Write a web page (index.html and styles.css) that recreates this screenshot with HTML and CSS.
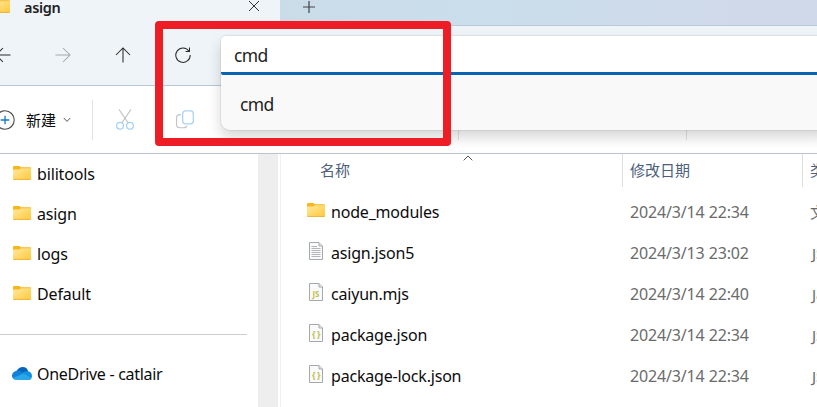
FILE: index.html
```html
<!DOCTYPE html>
<html lang="zh-CN">
<head>
<meta charset="utf-8">
<title>asign</title>
<link rel="stylesheet" href="styles.css">
</head>
<body>
<svg class="defs" width="0" height="0">
  <defs>
    <linearGradient id="gold" x1="0" y1="0" x2="1" y2="1"><stop offset="0" stop-color="#ffe9a0"/><stop offset="1" stop-color="#ffc938"/></linearGradient>
    <symbol id="folder" viewBox="0 0 18 14">
      <path d="M0 1.2Q0 0 1.2 0H6.3L8 1.2H17Q18 1.2 18 2.2V8H0Z" fill="#f8b51c"/>
      <path d="M0 3.6H6.4L8 2.2H18V13Q18 14 17 14H1Q0 14 0 13Z" fill="url(#gold)"/>
      <path d="M.4 13.4H17.6" stroke="#edb53c" stroke-width="1"/>
    </symbol>
    <symbol id="page" viewBox="0 0 14 18">
      <path d="M.5.5H10L13.5 4V17.5H.5Z" fill="#f9fafb" stroke="#a6a8ac"/>
      <path d="M10 .5V4H13.5" fill="#e4e6e8" stroke="#a6a8ac"/>
    </symbol>
  </defs>
</svg>
<div class="window">
  <header class="tabs">
    <div class="tab">
      <svg class="tab-folder" width="18" height="14"><use href="#folder"/></svg>
      <span class="tab-title">asign</span>
      <svg class="close" width="12" height="12" viewBox="0 0 12 12"><path d="M1 1 11 11M11 1 1 11"/></svg>
    </div>
    <div class="strip"><svg class="plus" width="12" height="12" viewBox="0 0 12 12"><path d="M6 0V12M0 6H12"/></svg></div>
  </header>

  <nav class="nav">
    <svg class="ico back" width="16" height="16" viewBox="0 0 16 16"><path d="M15.5 8H1M8 1 1 8 8 15"/></svg>
    <svg class="ico forward" width="16" height="16" viewBox="0 0 16 16"><path d="M.5 8H15M8 1 15 8 8 15"/></svg>
    <svg class="ico up" width="16" height="16" viewBox="0 0 16 16"><path d="M8 15.5V1M1 8 8 1 15 8"/></svg>
    <svg class="ico refresh" width="16" height="16" viewBox="0 0 16 16"><path d="M14 4.2A7.2 7.2 0 1 0 15.2 8M14.5.6V4.4H10.6"/></svg>
    <div class="address">
      <div class="field">cmd</div>
      <div class="suggest">cmd</div>
    </div>
  </nav>

  <div class="toolbar">
    <svg class="new" width="20" height="20" viewBox="0 0 20 20"><circle cx="10" cy="10" r="9.2" fill="#fff" stroke="#4a4a4a" stroke-width="1.1"/><path d="M10 5.7V14.3M5.7 10H14.3" stroke="#1478c8" stroke-width="1.3"/></svg>
    <span class="new-label">新建</span>
    <svg class="chev" width="8" height="6" viewBox="0 0 8 6"><path d="M.8 1 4 4.4 7.2 1"/></svg>
    <i class="sep sep-new"></i>
    <svg class="cut" width="18" height="21" viewBox="0 0 18 21" fill="none"><path d="M3 .5 12.3 14M15 .5 5.7 14" stroke="#bdbdbd" stroke-width="1.1"/><circle cx="4" cy="16.8" r="3.4" stroke="#a3d0f2" stroke-width="1.2"/><circle cx="14" cy="16.8" r="3.4" stroke="#a3d0f2" stroke-width="1.2"/></svg>
    <svg class="copy" width="18" height="19" viewBox="0 0 18 19" fill="none"><path d="M5 4.6H3.6Q.6 4.6 .6 7.6V14.5Q.6 17.8 3.9 17.8H7.5Q10.5 17.8 11 15.6" stroke="#c2c2c2" stroke-width="1.1"/><rect x="6.7" y=".9" width="10.6" height="13" rx="2.8" stroke="#a9d3f4" stroke-width="1.3"/></svg>
    <i class="sep sep-a"></i>
    <i class="sep sep-b"></i>
  </div>

  <main class="content">
    <aside class="side">
      <div class="place"><svg width="18" height="14"><use href="#folder"/></svg><span>bilitools</span></div>
      <div class="place"><svg width="18" height="14"><use href="#folder"/></svg><span>asign</span></div>
      <div class="place"><svg width="18" height="14"><use href="#folder"/></svg><span>logs</span></div>
      <div class="place"><svg width="18" height="14"><use href="#folder"/></svg><span>Default</span></div>
      <div class="divider"></div>
      <div class="place cloud"><svg width="20" height="13" viewBox="0 0 20 13"><path d="M4.6 4Q7 0 10.6 0 15 .1 16.2 4.3L12 8 4 6Z" fill="#0864b8"/><path d="M4.5 3.7Q8 2.8 10.5 5.5L14 8 3 12.6Q0 12 0 8.5.3 4.6 4.5 3.7Z" fill="#1380d8"/><path d="M10 6.2Q12.5 3.8 16 4.3 19.7 5 20 8.7 20 12 17 13H8Z" fill="#1490df"/><path d="M1 11 11.4 6.4 19.3 11Q18.3 13 16 13H4.2Q2 13 1 11Z" fill="#28a8ea"/></svg><span>OneDrive - catlair</span></div>
      <div class="place desktop"><svg width="16" height="12"><rect width="16" height="12" rx="1.6" fill="#35b2f8"/></svg></div>
    </aside>
    <div class="scroll"></div>
    <section class="files">
      <div class="head">
        <div class="h-name">名称<svg class="sort" width="10" height="6" viewBox="0 0 10 6"><path d="M.7 5.3 5 1 9.3 5.3"/></svg></div>
        <div class="h-date">修改日期</div>
        <div class="h-type">类型</div>
      </div>
      <div class="row"><div class="name"><svg class="dir" width="18" height="14"><use href="#folder"/></svg><span>node_modules</span></div><div class="date">2024/3/14 22:34</div><div class="type">文件夹</div></div>
      <div class="row"><div class="name"><svg width="14" height="18" viewBox="0 0 14 18"><use href="#page"/><path d="M2.5 4.5H8M2.5 6.5H11.5M2.5 8.5H11.5M2.5 10.5H11.5M2.5 12.5H11.5M2.5 14.5H11.5" stroke="#b4b6b8"/></svg><span>asign.json5</span></div><div class="date">2024/3/13 23:02</div><div class="type latin">JSON5</div></div>
      <div class="row"><div class="name"><svg width="14" height="18" viewBox="0 0 14 18"><use href="#page"/><text x="7" y="13.6" class="badge">JS</text></svg><span>caiyun.mjs</span></div><div class="date">2024/3/14 22:40</div><div class="type latin">JavaScript</div></div>
      <div class="row"><div class="name"><svg width="14" height="18" viewBox="0 0 14 18"><use href="#page"/><text x="7" y="13" class="badge brace">{ }</text></svg><span>package.json</span></div><div class="date">2024/3/14 22:34</div><div class="type latin">JSON</div></div>
      <div class="row"><div class="name"><svg width="14" height="18" viewBox="0 0 14 18"><use href="#page"/><text x="7" y="13" class="badge brace">{ }</text></svg><span>package-lock.json</span></div><div class="date">2024/3/14 22:34</div><div class="type latin">JSON</div></div>
    </section>
  </main>
  <div class="marker"></div>
</div>
</body>
</html>
```
FILE: styles.css
```css
* { box-sizing: border-box; }
body { margin: 0; font: 16px/20px "Noto Sans", "Noto Sans CJK SC", sans-serif; letter-spacing: -.2px; color: #0c0c0c; }
svg { display: block; flex: none; }
.defs { position: absolute; }
.window { position: relative; width: 817px; height: 407px; overflow: hidden; display: flex; flex-direction: column; background: #fff; }

.tabs { display: flex; height: 26px; flex: none; }
.tab { width: 280px; display: flex; align-items: flex-start; background: #eff4f9; }
.tab-folder { margin: -1px 0 0 -8px; }
.tab-title { margin: 0 0 0 14px; width: 224px; font-size: 14.5px; line-height: 14px; font-weight: 600; letter-spacing: -.35px; color: #222; }
.close { stroke: #333; stroke-width: 1; fill: none; }
.strip { flex: 1; border-bottom: 1px solid #b9c9d8; background: linear-gradient(90deg, #cbdce9, #cadeeb 40%, #d0d9ea 85%); }
.plus { margin: 1px 0 0 23px; stroke: #444; stroke-width: 1.2; }

.nav { position: relative; z-index: 1; display: flex; height: 60px; flex: none; align-items: flex-start; padding-top: 21px; background: #eff4f9; border-bottom: 1px solid #b8c6d3; }
.ico { fill: none; stroke: #2b2b2b; stroke-width: 1.05; }
.back { margin-left: -5px; }
.forward { margin-left: 44px; stroke: #a5a8ab; }
.up { margin-left: 44px; }
.refresh { margin-left: 44px; }
.address { position: absolute; left: 221px; top: 10px; width: 610px; height: 94px; border-radius: 5px 5px 9px 9px; background: #f9f9f9; box-shadow: 0 0 0 1px rgba(0,0,0,.06), 0 7px 14px rgba(0,0,0,.17); color: #222; font-size: 17.5px; letter-spacing: -.65px; }
.field { height: 39px; padding: 9px 13px 0; background: #fff; border-bottom: 3px solid #0964b3; border-radius: 5px 5px 2px 2px; }
.suggest { padding: 19px 19px; }

.toolbar { display: flex; height: 68px; flex: none; align-items: center; border-bottom: 1px solid #b8c6d3; }
.new { margin-left: -5px; }
.new-label { margin-left: 11px; width: 30px; font-size: 15px; letter-spacing: 0; }
.chev, .sort { fill: none; stroke: #555; stroke-width: 1; }
.chev { margin-left: 7px; }
.sep { width: 1px; height: 40px; background: #e2e2e2; }
.sep-new { margin-left: 21px; }
.cut { margin-left: 23px; }
.copy { margin-left: 42px; }
.sep-a { margin-left: 264px; }
.sep-b { margin-left: 227px; }

.content { display: flex; flex: 1; min-height: 0; }
.side { width: 258px; overflow: hidden; }
.place { display: flex; height: 40px; align-items: center; padding-left: 13px; gap: 6px; letter-spacing: -.15px; white-space: nowrap; }
.place svg { margin-top: -2px; }
.divider { width: 247px; height: 1px; margin: 20px 0 19px; background: #cecece; }
.cloud { padding-left: 12px; gap: 5px; letter-spacing: -.3px; }
.cloud svg { margin-top: -1px; }
.desktop { padding-left: 14px; }
.desktop svg { margin-top: 1px; }
.scroll { width: 23px; border-left: 20px solid #eee; border-right: 1px solid #f1f1f1; }
.files { flex: 1; min-width: 0; overflow: hidden; }
.head, .row { display: grid; grid-template-columns: 341px 180px 100px; }
.head { height: 32px; margin-bottom: 5px; align-items: stretch; color: #4c607a; font-size: 15px; letter-spacing: 0; line-height: 33px; }
.h-name { display: flex; align-items: flex-start; padding-left: 39px; }
.sort { margin: 1px 0 0 113px; }
.h-date, .h-type { border-left: 1px solid #dedede; padding-left: 7px; }
.row { height: 41px; align-items: center; }
.name { display: flex; align-items: center; padding-left: 28px; gap: 8px; }
.name svg { margin-top: -3px; }
.name .dir { margin-left: -2px; margin-right: -2px; }
.date, .type { padding-left: 8px; color: #6b6b6b; white-space: nowrap; }
.date { letter-spacing: -.15px; }
.type { font-size: 15px; }
.latin { padding-left: 10px; }
.badge { font: 700 8px "Noto Sans", sans-serif; text-anchor: middle; fill: #c2c14b; letter-spacing: 0; }
.brace { font-size: 9px; letter-spacing: -.4px; }

.marker { position: absolute; z-index: 2; left: 155px; top: 21px; width: 296px; height: 125px; border: 8px solid #ee1c24; border-radius: 4px; }
```
